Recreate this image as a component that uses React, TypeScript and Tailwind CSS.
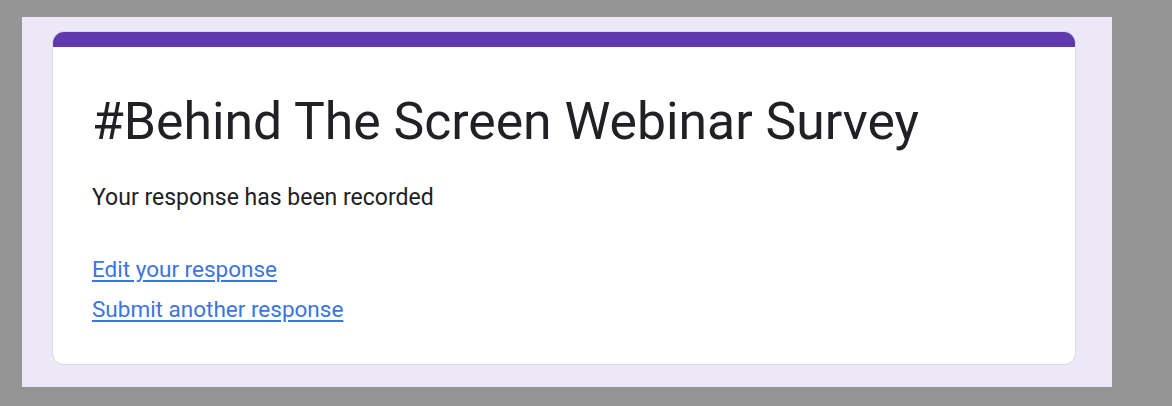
export default function App() {
  return (
    <div className="w-[1172px] h-[406px] bg-[#959595] pt-[17px] pl-[22px]">
      {/* Lavender page */}
      <div className="w-[1090px] h-[370px] bg-[#ede8f7] pt-[14px] pl-[30px] pr-[36px]">
        {/* Card */}
        <div className="w-[1024px] h-[334px] bg-white rounded-[12px] border border-[#dadce0] overflow-hidden">
          <div className="h-[16px] bg-[#5f39ae] -mx-px -mt-px" />
          <div
            className="pl-[39px] pt-[44px]"
            style={{ fontFamily: "Roboto, 'Liberation Sans', sans-serif" }}
          >
            <h1 className="text-[51.7px] leading-[62px] text-[#202124] font-normal">
              #Behind The Screen Webinar Survey
            </h1>
            <p className="mt-[31px] text-[23px] leading-[28px] text-[#202124]">
              Your response has been recorded
            </p>
            <div className="mt-[43px] flex flex-col gap-[12px] items-start text-[22.5px] leading-[28px]">
              <a href="#" className="text-[#3a75e0] underline underline-offset-[3px]">
                Edit your response
              </a>
              <a href="#" className="text-[#3a75e0] underline underline-offset-[3px]">
                Submit another response
              </a>
            </div>
          </div>
        </div>
      </div>
    </div>
  );
}
